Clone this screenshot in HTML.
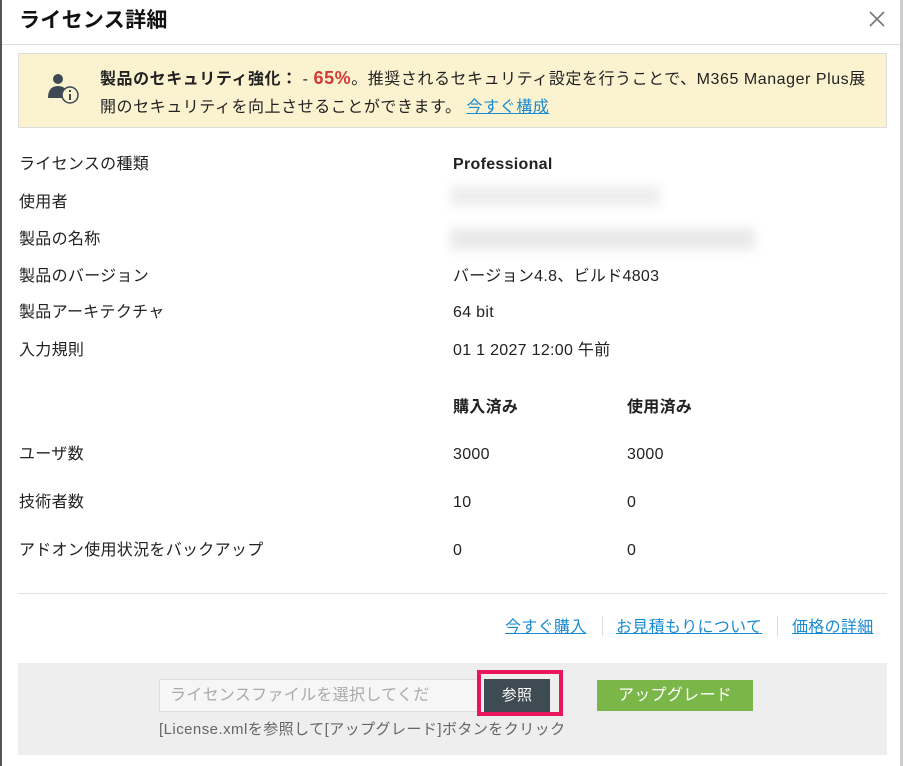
<!DOCTYPE html>
<html><head><meta charset="utf-8"><style>
*{box-sizing:border-box;margin:0;padding:0}
body{width:903px;height:766px;background:#fff;font-family:"Liberation Sans","Noto Sans CJK JP",sans-serif;color:#222;position:relative;overflow:hidden;font-size:16px;letter-spacing:.3px}
.a{position:absolute;white-space:nowrap;line-height:22px}
.lnk{color:#1a8bd0;text-decoration:underline}
</style></head><body>
<div class="a" style="left:0;top:0;width:2px;height:766px;background:#555"></div>
<div class="a" style="left:900px;top:0;width:3px;height:766px;background:#ccc"></div>
<div class="a" style="left:19px;top:8px;font-size:21px;font-weight:bold;color:#111;line-height:26px">ライセンス詳細</div>
<svg class="a" style="left:869px;top:11px" width="16" height="16" viewBox="0 0 16 16"><path d="M1 1L15 15M15 1L1 15" stroke="#777" stroke-width="1.6"/></svg>
<div class="a" style="left:2px;top:44px;width:898px;height:1px;background:#ddd"></div>
<div class="a" style="left:18px;top:53px;width:869px;height:75px;background:#fbf3d0;border:1px solid #ddd"></div>
<svg class="a" style="left:46px;top:72px" width="44" height="34" viewBox="0 0 44 34">
<circle cx="12" cy="7" r="5" fill="#3d4a55"/><path d="M2 26 Q2 14 12 14 Q22 14 22 26 Z" fill="#3d4a55"/>
<circle cx="24" cy="23" r="8" fill="#fbf3d0" stroke="#3d4a55" stroke-width="1.5"/>
<rect x="23" y="22" width="2" height="6" fill="#3d4a55"/><rect x="23" y="18" width="2" height="2" fill="#3d4a55"/></svg>
<div class="a" style="left:100px;top:67px;font-size:16px;letter-spacing:.55px"><b>製品のセキュリティ強化：</b> - <b style="color:#d63a36;font-size:18px">65%</b>。推奨されるセキュリティ設定を行うことで、M365 Manager Plus展</div>
<div class="a" style="left:100px;top:97px;font-size:16px;letter-spacing:.55px">開のセキュリティを向上させることができます。 <span class="lnk">今すぐ構成</span></div>
<div class="a" style="left:19px;top:154px">ライセンスの種類</div><div class="a" style="left:453px;top:154px;font-weight:bold">Professional</div>
<div class="a" style="left:19px;top:192px">使用者</div>
<div class="a" style="left:19px;top:229px">製品の名称</div>
<div class="a" style="left:450px;top:186px;width:210px;height:20px;background:#eee;filter:blur(5px)"></div>
<div class="a" style="left:450px;top:228px;width:305px;height:22px;background:#eaeaea;filter:blur(5px)"></div>
<div class="a" style="left:19px;top:266px">製品のバージョン</div><div class="a" style="left:453px;top:266px">バージョン4.8、ビルド4803</div>
<div class="a" style="left:19px;top:302px">製品アーキテクチャ</div><div class="a" style="left:453px;top:302px">64 bit</div>
<div class="a" style="left:19px;top:340px">入力規則</div><div class="a" style="left:453px;top:340px">01 1 2027 12:00 午前</div>
<div class="a" style="left:453px;top:397px;font-weight:bold">購入済み</div><div class="a" style="left:627px;top:397px;font-weight:bold">使用済み</div>
<div class="a" style="left:19px;top:444px">ユーザ数</div><div class="a" style="left:453px;top:444px">3000</div><div class="a" style="left:627px;top:444px">3000</div>
<div class="a" style="left:19px;top:492px">技術者数</div><div class="a" style="left:453px;top:492px">10</div><div class="a" style="left:627px;top:492px">0</div>
<div class="a" style="left:19px;top:540px">アドオン使用状況をバックアップ</div><div class="a" style="left:453px;top:540px">0</div><div class="a" style="left:627px;top:540px">0</div>
<div class="a" style="left:18px;top:593px;width:869px;height:1px;background:#e2e2e2"></div>
<div class="a" style="left:505px;top:617px"><span class="lnk">今すぐ購入</span></div>
<div class="a" style="left:602px;top:616px;width:1px;height:20px;background:#ddd"></div>
<div class="a" style="left:616px;top:617px"><span class="lnk">お見積もりについて</span></div>
<div class="a" style="left:777px;top:616px;width:1px;height:20px;background:#ddd"></div>
<div class="a" style="left:792px;top:617px"><span class="lnk">価格の詳細</span></div>
<div class="a" style="left:18px;top:663px;width:869px;height:92px;background:#eeeeee"></div>
<div class="a" style="left:159px;top:679px;width:320px;height:33px;background:#f6f6f6;border:1px solid #ddd;padding:5px 10px;color:#aaa">ライセンスファイルを選択してくだ</div>
<div class="a" style="left:477px;top:670px;width:86px;height:46px;border:4px solid #e8175d"></div>
<div class="a" style="left:484px;top:679px;width:66px;height:33px;background:#3f4b53;color:#fff;text-align:center;line-height:33px;font-size:15px">参照</div>
<div class="a" style="left:597px;top:680px;width:156px;height:31px;background:#7ab648;color:#fff;text-align:center;line-height:31px;font-size:16px">アップグレード</div>
<div class="a" style="left:159px;top:719px;font-size:15px;color:#666;letter-spacing:.45px">[License.xmlを参照して[アップグレード]ボタンをクリック</div>
</body></html>
